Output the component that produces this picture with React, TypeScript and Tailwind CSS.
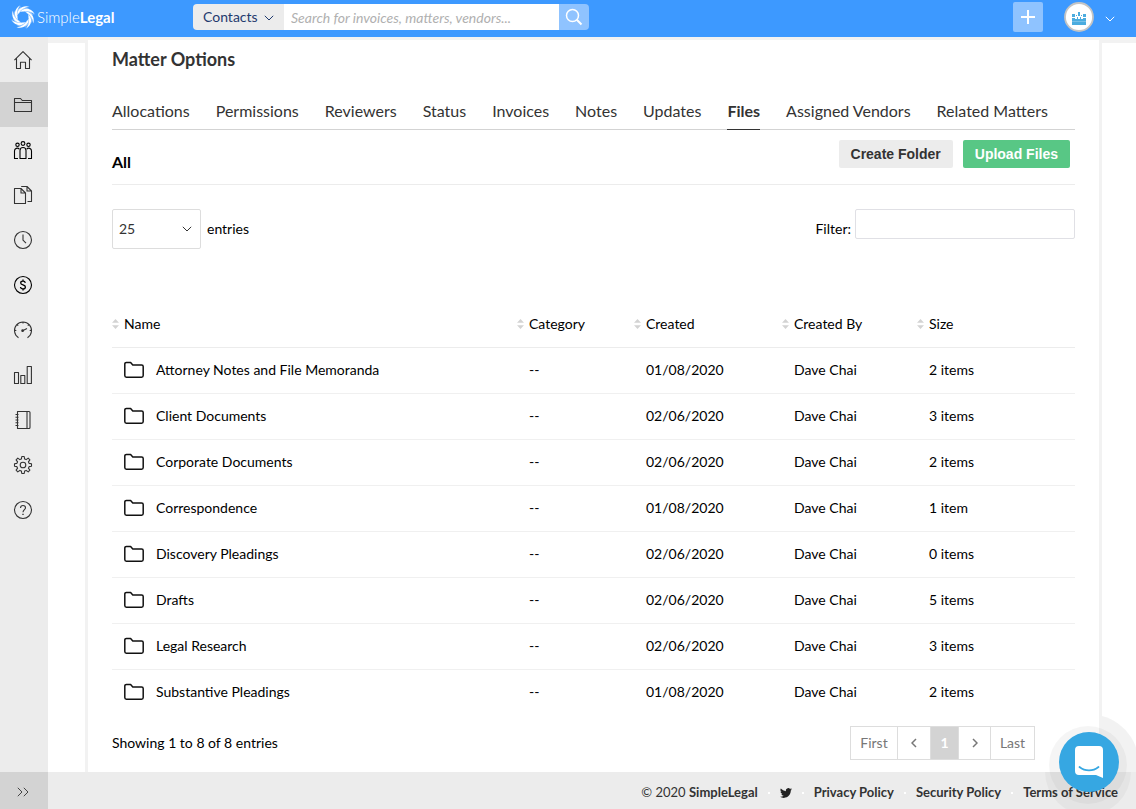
import { useState } from 'react';
import type { ReactNode } from 'react';

interface FileRow {
  name: string;
  category: string;
  created: string;
  createdBy: string;
  size: string;
}

const TABS = [
  'Allocations',
  'Permissions',
  'Reviewers',
  'Status',
  'Invoices',
  'Notes',
  'Updates',
  'Files',
  'Assigned Vendors',
  'Related Matters',
];

const COLUMNS = [
  { label: 'Name', width: '' },
  { label: 'Category', width: 'w-[117px]' },
  { label: 'Created', width: 'w-[148px]' },
  { label: 'Created By', width: 'w-[135px]' },
  { label: 'Size', width: 'w-[158px]' },
];

const ROWS: FileRow[] = [
  { name: 'Attorney Notes and File Memoranda', category: '--', created: '01/08/2020', createdBy: 'Dave Chai', size: '2 items' },
  { name: 'Client Documents', category: '--', created: '02/06/2020', createdBy: 'Dave Chai', size: '3 items' },
  { name: 'Corporate Documents', category: '--', created: '02/06/2020', createdBy: 'Dave Chai', size: '2 items' },
  { name: 'Correspondence', category: '--', created: '01/08/2020', createdBy: 'Dave Chai', size: '1 item' },
  { name: 'Discovery Pleadings', category: '--', created: '02/06/2020', createdBy: 'Dave Chai', size: '0 items' },
  { name: 'Drafts', category: '--', created: '02/06/2020', createdBy: 'Dave Chai', size: '5 items' },
  { name: 'Legal Research', category: '--', created: '02/06/2020', createdBy: 'Dave Chai', size: '3 items' },
  { name: 'Substantive Pleadings', category: '--', created: '01/08/2020', createdBy: 'Dave Chai', size: '2 items' },
];

// Sidebar glyphs share an 18x18 box
function NavIcon({ children, dark = false }: { children: ReactNode; dark?: boolean }) {
  return (
    <svg
      width="20"
      height="20"
      viewBox="-1 -1 20 20"
      fill="none"
      stroke={dark ? '#000' : '#333'}
      strokeWidth="1.1"
      strokeLinejoin="round"
      aria-hidden="true"
    >
      {children}
    </svg>
  );
}

const NAV_ITEMS: Array<{ label: string; icon: ReactNode }> = [
  {
    label: 'Home',
    icon: (
      <NavIcon>
        <path d="M.4 9.2 9 .6l8.6 8.6M2.5 7.4v10.1h4v-6.2h5v6.2h4V7.4" />
      </NavIcon>
    ),
  },
  {
    label: 'Matters',
    icon: (
      <NavIcon>
        <path d="M.5 15.500V2.500h6l1.800 2h9.200v11zM.5 6.500h17" />
      </NavIcon>
    ),
  },
  {
    label: 'Vendors',
    icon: (
      <NavIcon dark>
        <circle cx="9" cy="2.500" r="1.900" />
        <circle cx="3.500" cy="3.800" r="1.700" />
        <circle cx="14.500" cy="3.800" r="1.700" />
        <path d="M6 17.500V9.500a3 3 0 0 1 6 0v8zM4 17.500H.5V10A2.700 2.700 0 0 1 5.300 8.200M14 17.500h3.500V10a2.700 2.700 0 0 0-4.800-1.800" />
      </NavIcon>
    ),
  },
  {
    label: 'Documents',
    icon: (
      <NavIcon>
        <path d="M.5 17.500v-15H7L11.500 7v10.500zM7 2.500V7h4.500M7.200.5h5.800l4.500 4.500v10.500h-4M13 .5V5h4.500" />
      </NavIcon>
    ),
  },
  {
    label: 'Timekeeping',
    icon: (
      <NavIcon>
        <circle cx="9" cy="9" r="8.500" />
        <path d="M9 3.500V9.200l3 3" />
      </NavIcon>
    ),
  },
  {
    label: 'Billing',
    icon: (
      <NavIcon dark>
        <circle cx="9" cy="9" r="8.500" />
        <path
          d="M11.300 6.800C11.100 5.700 10.200 5.200 9 5.200c-1.400 0-2.300.6-2.300 1.700C6.700 9.500 11.400 8.300 11.400 11c0 1.200-1 1.900-2.400 1.900s-2.400-.7-2.500-1.900M9 3.500v1.700M9 12.900v1.700"
          strokeWidth="1.300"
        />
      </NavIcon>
    ),
  },
  {
    label: 'Dashboard',
    icon: (
      <NavIcon>
        <path d="M4.500 16.700a8.500 8.500 0 1 1 9 0M9 .8v1.800M.5 9.500h1.800M15.700 9.500h1.800M3 3.500l1.200 1.200M15 3.500l-1.200 1.200M8.600 9.800l4.400-2.300" />
        <circle cx="8.600" cy="9.700" r=".8" fill="#333" />
      </NavIcon>
    ),
  },
  {
    label: 'Reports',
    icon: (
      <NavIcon>
        <path d="M.5 6.500h4v11h-4zM6.800 9.500h4v8h-4zM13.200.5h4.200v17h-4.200z" />
      </NavIcon>
    ),
  },
  {
    label: 'Directory',
    icon: (
      <NavIcon>
        <path d="M3.500.5H15a1 1 0 0 1 1 1v15a1 1 0 0 1-1 1H3.500zM13 .5v17M1.500 3.500h3M1.500 6.300h3M1.500 9h3M1.500 11.800h3M1.500 14.500h3" />
      </NavIcon>
    ),
  },
  {
    label: 'Settings',
    icon: (
      <NavIcon>
        <path d="M7.400 2.900 7.800.5h2.400l.4 2.400 1.600.7 2-1.500 1.700 1.700-1.500 2 .7 1.600 2.400.4v2.400l-2.400.4-.7 1.600 1.500 2-1.700 1.700-2-1.500-1.600.7-.4 2.400H7.800l-.4-2.400-1.600-.7-2 1.500-1.700-1.700 1.500-2-.7-1.600L.5 10.200V7.800l2.400-.4.7-1.600-1.500-2 1.700-1.700 2 1.500z" />
        <circle cx="9" cy="9" r="2.800" />
      </NavIcon>
    ),
  },
  {
    label: 'Help',
    icon: (
      <NavIcon>
        <circle cx="9" cy="9" r="8.500" />
        <path d="M6.500 6.900A2.500 2.500 0 0 1 9 4.500c1.500 0 2.500.9 2.500 2.200C11.500 8.600 9 8.700 9 11.300" />
        <path d="M9 12.700v1.300" strokeWidth="1.400" />
      </NavIcon>
    ),
  },
];

const BLADE_ANGLES = [0, 45, 90, 135, 180, 225, 270, 315];

function Logo() {
  return (
    <a href="#" className="flex items-center gap-0.5 text-[15px] leading-5 text-white">
      <svg width="24" height="24" viewBox="-12 -12 24 24" fill="#fff" aria-hidden="true">
        {BLADE_ANGLES.map((angle) => (
          <g key={angle} transform={`rotate(${angle})`}>
            <path d="M-5.500-1.500C-6.500-7-1-12.500 6.500-10.200 1.500-10-3-7-5.500-1.500z" />
            <path d="M-4.300-3.500C-2-7.500 1.500-9.300 5.500-8.700" fill="none" stroke="#fff" strokeWidth=".5" />
          </g>
        ))}
      </svg>
      <span className="font-light">
        Simple<span className="font-bold">Legal</span>
      </span>
    </a>
  );
}

function Chevron({ className }: { className: string }) {
  return (
    <svg width="10" height="6" viewBox="0 0 10 6" fill="none" stroke="currentColor" className={className} aria-hidden="true">
      <path d="M.8.8 5 5 9.200.8" />
    </svg>
  );
}

function TopBar() {
  return (
    <header className="flex h-[37px] shrink-0 items-center bg-[#3d99ff] pr-[21px] pl-[11px]">
      <div className="w-[182px] shrink-0 pb-1">
        <Logo />
      </div>

      <form className="flex w-[396px] pb-1" onSubmit={(e) => e.preventDefault()}>
        <div className="relative shrink-0">
          <select
            aria-label="Search in"
            className="block h-[26px] w-[91px] appearance-none rounded-l-sm bg-[#ececec] pl-2.5 text-sm text-[#1f3a6e]"
          >
            <option>Contacts</option>
          </select>
          <Chevron className="pointer-events-none absolute top-[11px] right-2.5 text-[#1f3a6e]" />
        </div>
        <input
          type="search"
          aria-label="Search"
          placeholder="Search for invoices, matters, vendors..."
          className="h-[26px] min-w-0 flex-1 bg-white pt-0.5 pl-[7px] text-sm italic outline-none placeholder:text-[#b0b0b0]"
        />
        <button
          type="submit"
          aria-label="Submit search"
          className="flex h-[26px] w-[30px] items-center justify-center rounded-r-sm bg-[#8fc3ff]"
        >
          <svg width="18" height="18" viewBox="0 0 18 18" fill="none" stroke="#fff" aria-hidden="true">
            <circle cx="7.500" cy="7.500" r="6" strokeWidth="1.500" />
            <path d="m11.800 11.800 4.700 4.700" strokeWidth="2" />
          </svg>
        </button>
      </form>

      <div className="ml-auto flex items-center pb-1">
        <button type="button" aria-label="Add" className="flex h-[30px] w-[30px] items-center justify-center rounded-xs bg-[#8fc3ff]">
          <svg width="14" height="14" viewBox="0 0 14 14" stroke="#fff" strokeWidth="2" aria-hidden="true">
            <path d="M7 0v14M0 7h14" />
          </svg>
        </button>
        <button type="button" aria-label="Account" className="ml-[21px] flex items-center text-white">
          <svg width="30" height="30" viewBox="0 0 30 30" aria-hidden="true">
            <circle cx="15" cy="15" r="14" fill="#fff" stroke="#c4c4c4" strokeWidth="1.800" />
            <path
              d="M8 16h3v1h2v-2h1v2h2v-2h1v2h2v-1h3v7H8zM14 10h2v4h-2zM8 12h3v3H8zM19 12h3v3h-3zM12 13h1v1h-1zM17 13h1v1h-1z"
              fill="#4bacdf"
            />
            <path d="M8 19.500h14" stroke="#a5d5ee" strokeWidth=".5" />
          </svg>
          <Chevron className="mt-1 ml-[11px]" />
        </button>
      </div>
    </header>
  );
}

function Sidebar() {
  return (
    <nav aria-label="Main" className="w-12 shrink-0 bg-[#ececec]">
      <ul>
        {NAV_ITEMS.map((item) => (
          <li key={item.label}>
            <a
              href="#"
              aria-label={item.label}
              aria-current={item.label === 'Matters' ? 'page' : undefined}
              className={`flex h-[45px] items-center justify-center pr-0.5 ${
                item.label === 'Matters' ? 'bg-[#d3d3d3]' : ''
              }`}
            >
              {item.icon}
            </a>
          </li>
        ))}
      </ul>
    </nav>
  );
}

function FilesTable({ rows }: { rows: FileRow[] }) {
  return (
    <table className="mt-[53px] w-full table-fixed border-collapse text-sm">
      <thead>
        <tr className="h-[45px] border-b border-[#ececec]">
          {COLUMNS.map((col) => (
            <th key={col.label} scope="col" className={`p-0 text-left font-normal ${col.width}`}>
              <button type="button" className="flex items-center gap-[5px]">
                <svg width="7" height="10" viewBox="0 0 7 10" fill="#d3d3d3" aria-hidden="true">
                  <path d="M3.500 0 7 3.800H0zM3.500 10 0 6.200h7z" />
                </svg>
                {col.label}
              </button>
            </th>
          ))}
        </tr>
      </thead>
      <tbody>
        {rows.map((row) => (
          <tr key={row.name} className="h-[46px] border-b border-[#f0f0f0] last:border-b-0">
            <td className="p-0 pl-3">
              <a href="#" className="flex items-center gap-3">
                <svg width="20" height="18" viewBox="0 0 20 18" fill="none" stroke="#111" strokeWidth="1.500" strokeLinejoin="round" aria-hidden="true">
                  <path d="M.8 3a1.600 1.600 0 0 1 1.600-1.600h4.200L8.800 4h8.800a1.600 1.600 0 0 1 1.600 1.600v9a1.600 1.600 0 0 1-1.600 1.600H2.400A1.600 1.600 0 0 1 .8 14.600z" />
                </svg>
                {row.name}
              </a>
            </td>
            <td className="p-0 pl-3">{row.category}</td>
            <td className="p-0 pl-3">{row.created}</td>
            <td className="p-0 pl-3">{row.createdBy}</td>
            <td className="p-0 pl-3">{row.size}</td>
          </tr>
        ))}
      </tbody>
    </table>
  );
}

function Pagination() {
  return (
    <nav aria-label="Pagination" className="mr-10 flex h-[34px] divide-x divide-[#ddd] border border-[#ddd] text-sm text-[#777]">
      <button type="button" className="w-[47px]">First</button>
      <button type="button" aria-label="Previous" className="flex w-[33px] items-center justify-center">
        <svg width="6" height="10" viewBox="0 0 6 10" fill="none" stroke="currentColor" strokeWidth="1.500" aria-hidden="true">
          <path d="M5 1 1 5l4 4" />
        </svg>
      </button>
      <button type="button" aria-current="page" className="w-7 bg-[#d3d3d3] font-bold text-white">1</button>
      <button type="button" aria-label="Next" className="flex w-8 items-center justify-center">
        <svg width="6" height="10" viewBox="0 0 6 10" fill="none" stroke="currentColor" strokeWidth="1.500" aria-hidden="true">
          <path d="m1 1 4 4-4 4" />
        </svg>
      </button>
      <button type="button" className="w-[43px]">Last</button>
    </nav>
  );
}

function Dot() {
  return <span className="h-0.5 w-0.5 bg-white" />;
}

function Footer() {
  return (
    <footer className="flex h-[37px] shrink-0 bg-[#ececec] text-[13px] text-[#333]">
      <button type="button" aria-label="Expand menu" className="flex w-12 items-center justify-center bg-[#d3d3d3] pt-0.5 pr-0.5">
        <svg width="12" height="10" viewBox="0 0 12 10" fill="none" stroke="#444" aria-hidden="true">
          <path d="m.8.8 4.200 4.200-4.200 4.200M6.800.8 11 5 6.800 9.200" />
        </svg>
      </button>
      <div className="flex flex-1 items-center justify-end gap-2.5 pt-1.5 pr-[18px] pb-0.5">
        <span>
          © 2020 <span className="font-bold">SimpleLegal</span>
        </span>
        <Dot />
        <a href="#" aria-label="Twitter">
          <svg width="12" height="12" viewBox="0 0 24 24" fill="#222" aria-hidden="true">
            <path d="M23.950 4.570a10 10 0 0 1-2.820.770 4.960 4.960 0 0 0 2.160-2.720 9.900 9.900 0 0 1-3.120 1.190 4.920 4.920 0 0 0-8.380 4.480A13.930 13.930 0 0 1 1.640 3.160a4.920 4.920 0 0 0 1.520 6.570 4.900 4.900 0 0 1-2.230-.610v.060a4.920 4.920 0 0 0 3.950 4.830 5 5 0 0 1-2.210.080 4.940 4.940 0 0 0 4.600 3.420A9.870 9.870 0 0 1 0 19.540a13.990 13.990 0 0 0 7.550 2.210c9.140 0 14.300-7.720 14-14.620a10.200 10.200 0 0 0 2.400-2.560z" />
          </svg>
        </a>
        <Dot />
        <a href="#" className="font-bold">Privacy Policy</a>
        <Dot />
        <a href="#" className="font-bold">Security Policy</a>
        <Dot />
        <a href="#" className="font-bold">Terms of Service</a>
      </div>
    </footer>
  );
}

function ChatLauncher() {
  return (
    <button type="button" aria-label="Open chat" className="fixed right-[17px] bottom-[17px] h-[60px] w-[60px] rounded-full">
      <svg width="60" height="60" viewBox="0 0 60 60" className="overflow-visible" aria-hidden="true">
        {/* Soft halo */}
        <path d="M43-16A49 49 0 0 1 79 40H43z" fill="#000" fillOpacity=".05" />
        <circle cx="29" cy="33" r="39" fill="#000" fillOpacity=".04" />
        <path d="M-14 40A43 43 0 0 0 72 40z" fill="#000" fillOpacity=".03" />
        <circle cx="30" cy="30" r="30" fill="#36a7e2" />
        <path d="M20 14h20a4 4 0 0 1 4 4v28l-7-3H20a4 4 0 0 1-4-4V18a4 4 0 0 1 4-4z" fill="#fff" />
        <path d="M20.500 35c5.500 4.500 13.500 4.500 19 0" fill="none" stroke="#36a7e2" strokeWidth="1.800" strokeLinecap="round" />
      </svg>
    </button>
  );
}

export default function App() {
  const [activeTab, setActiveTab] = useState('Files');
  const [filter, setFilter] = useState('');

  const rows = ROWS.filter((row) => row.name.toLowerCase().includes(filter.toLowerCase()));

  return (
    <div className="flex min-h-screen flex-col overflow-x-hidden bg-white font-[Lato,sans-serif] text-black">
      <TopBar />

      <div className="flex flex-1">
        <Sidebar />

        <div className="flex min-w-0 flex-1 border-t-[3px] border-[#f2f2f2]">
          <div className="w-[37px] shrink-0 border-t-[3px] border-[#f2f2f2]" />
          <main className="min-w-0 flex-1 border-x-[3px] border-[#f2f2f2] px-6 pt-[7px] pb-3">
            <h1 className="text-lg leading-6 font-bold text-[#333]">Matter Options</h1>

            {/* Section tabs */}
            <div role="tablist" className="mt-7 flex gap-[26px] border-b border-[#d3d3d3]">
              {TABS.map((tab) => (
                <button
                  key={tab}
                  type="button"
                  role="tab"
                  aria-selected={tab === activeTab}
                  onClick={() => setActiveTab(tab)}
                  className={`-mb-px border-b pb-1.5 text-base leading-6 whitespace-nowrap text-[#333] ${
                    tab === activeTab ? 'border-[#333] font-bold' : 'border-transparent'
                  }`}
                >
                  {tab}
                </button>
              ))}
            </div>

            {/* Folder heading and actions */}
            <div className="flex h-[55px] items-start justify-between border-b border-[#ececec] pt-2.5 pr-[5px]">
              <h2 className="pt-2.5 text-base leading-6 font-bold">All</h2>
              <div className="flex gap-2.5 font-['Liberation_Sans',Arial,sans-serif] text-sm font-bold">
                <button type="button" className="h-7 rounded-xs bg-[#ececec] px-3 text-[#333]">Create Folder</button>
                <button type="button" className="h-7 rounded-xs bg-[#58c785] px-3 text-white">Upload Files</button>
              </div>
            </div>

            {/* Page length and filter */}
            <div className="mt-6 flex items-start justify-between text-sm leading-10">
              <label className="flex gap-1.5">
                <span className="relative">
                  <select className="h-10 w-[89px] appearance-none rounded-xs border border-[#ddd] pl-1.5 text-sm text-[#333]">
                    <option>25</option>
                    <option>50</option>
                    <option>100</option>
                  </select>
                  <Chevron className="pointer-events-none absolute top-[17px] right-[9px] text-[#333]" />
                </span>
                entries
              </label>
              <label className="flex gap-1">
                Filter:
                <input
                  type="text"
                  value={filter}
                  onChange={(e) => setFilter(e.target.value)}
                  className="h-[30px] w-[220px] rounded-xs border border-[#e0e0e5] px-2"
                />
              </label>
            </div>

            <FilesTable rows={rows} />

            <div className="mt-[11px] flex items-center justify-between text-sm">
              <p>Showing 1 to {rows.length} of {ROWS.length} entries</p>
              <Pagination />
            </div>
          </main>
          <div className="w-[34px] shrink-0 border-t-[3px] border-[#f2f2f2]" />
        </div>
      </div>

      <Footer />
      <ChatLauncher />
    </div>
  );
}
